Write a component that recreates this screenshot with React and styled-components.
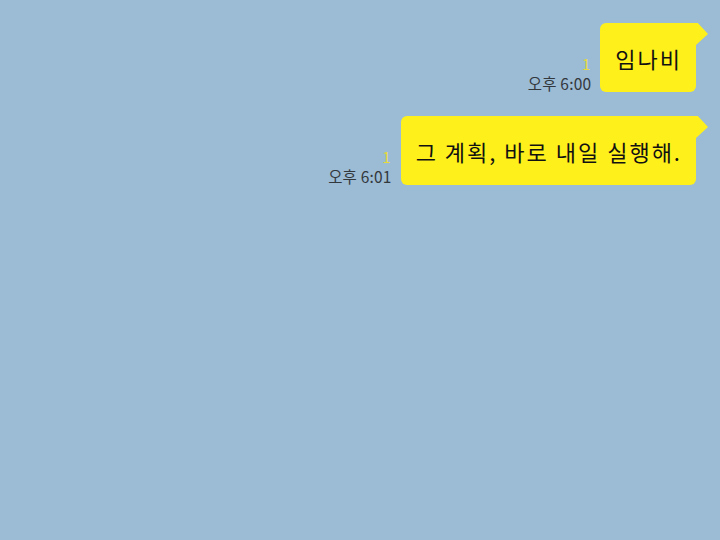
import React from "react";
import styled, { createGlobalStyle } from "styled-components";

const GlobalStyle = createGlobalStyle`
  html, body {
    margin: 0;
    padding: 0;
    background-color: #9cbbd4;
  }
  body {
    font-family: "Noto Sans CJK KR", "Noto Sans", sans-serif;
  }
`;

const Chat = styled.div`
  width: 720px;
  height: 540px;
  box-sizing: border-box;
  background-color: #9cbbd4;
  display: flex;
  flex-direction: column;
  align-items: flex-end;
  gap: 24px;
  padding: 23px 24px 0 0;
`;

const Row = styled.div`
  display: flex;
  flex-direction: row;
  align-items: flex-end;
  gap: 9px;
`;

const Meta = styled.div`
  display: flex;
  flex-direction: column;
  align-items: flex-end;
  padding-bottom: 0;
`;

const ReadCount = styled.div`
  color: #e6da3c;
  font-size: 15px;
  line-height: 18px;
  margin-right: 1px;
  margin-bottom: 1px;
`;

const Time = styled.div`
  color: #33383d;
  font-size: 15.5px;
  line-height: 18px;
  letter-spacing: 0.2px;
  white-space: nowrap;
`;

const Bubble = styled.div`
  position: relative;
  height: 69px;
  box-sizing: border-box;
  display: flex;
  align-items: center;
  padding: 0 14px 0 15px;
  background-color: #fef01b;
  color: #111;
  font-size: 22px;
  letter-spacing: 2px;
  border-radius: 6px 0 6px 6px;
  white-space: nowrap;

  &::after {
    content: "";
    position: absolute;
    top: 0;
    right: -12px;
    width: 12px;
    height: 22px;
    background-color: #fef01b;
    clip-path: polygon(0 0, 15% 0, 100% 50%, 0 100%);
  }
`;

const messages = [
  { text: "임나비", time: "오후 6:00" },
  { text: "그 계획, 바로 내일 실행해.", time: "오후 6:01" },
];

function App() {
  return (
    <>
      <GlobalStyle />
      <Chat>
        {messages.map((m, i) => (
          <Row key={i}>
            <Meta>
              <ReadCount>1</ReadCount>
              <Time>{m.time}</Time>
            </Meta>
            <Bubble>{m.text}</Bubble>
          </Row>
        ))}
      </Chat>
    </>
  );
}

export default App;
